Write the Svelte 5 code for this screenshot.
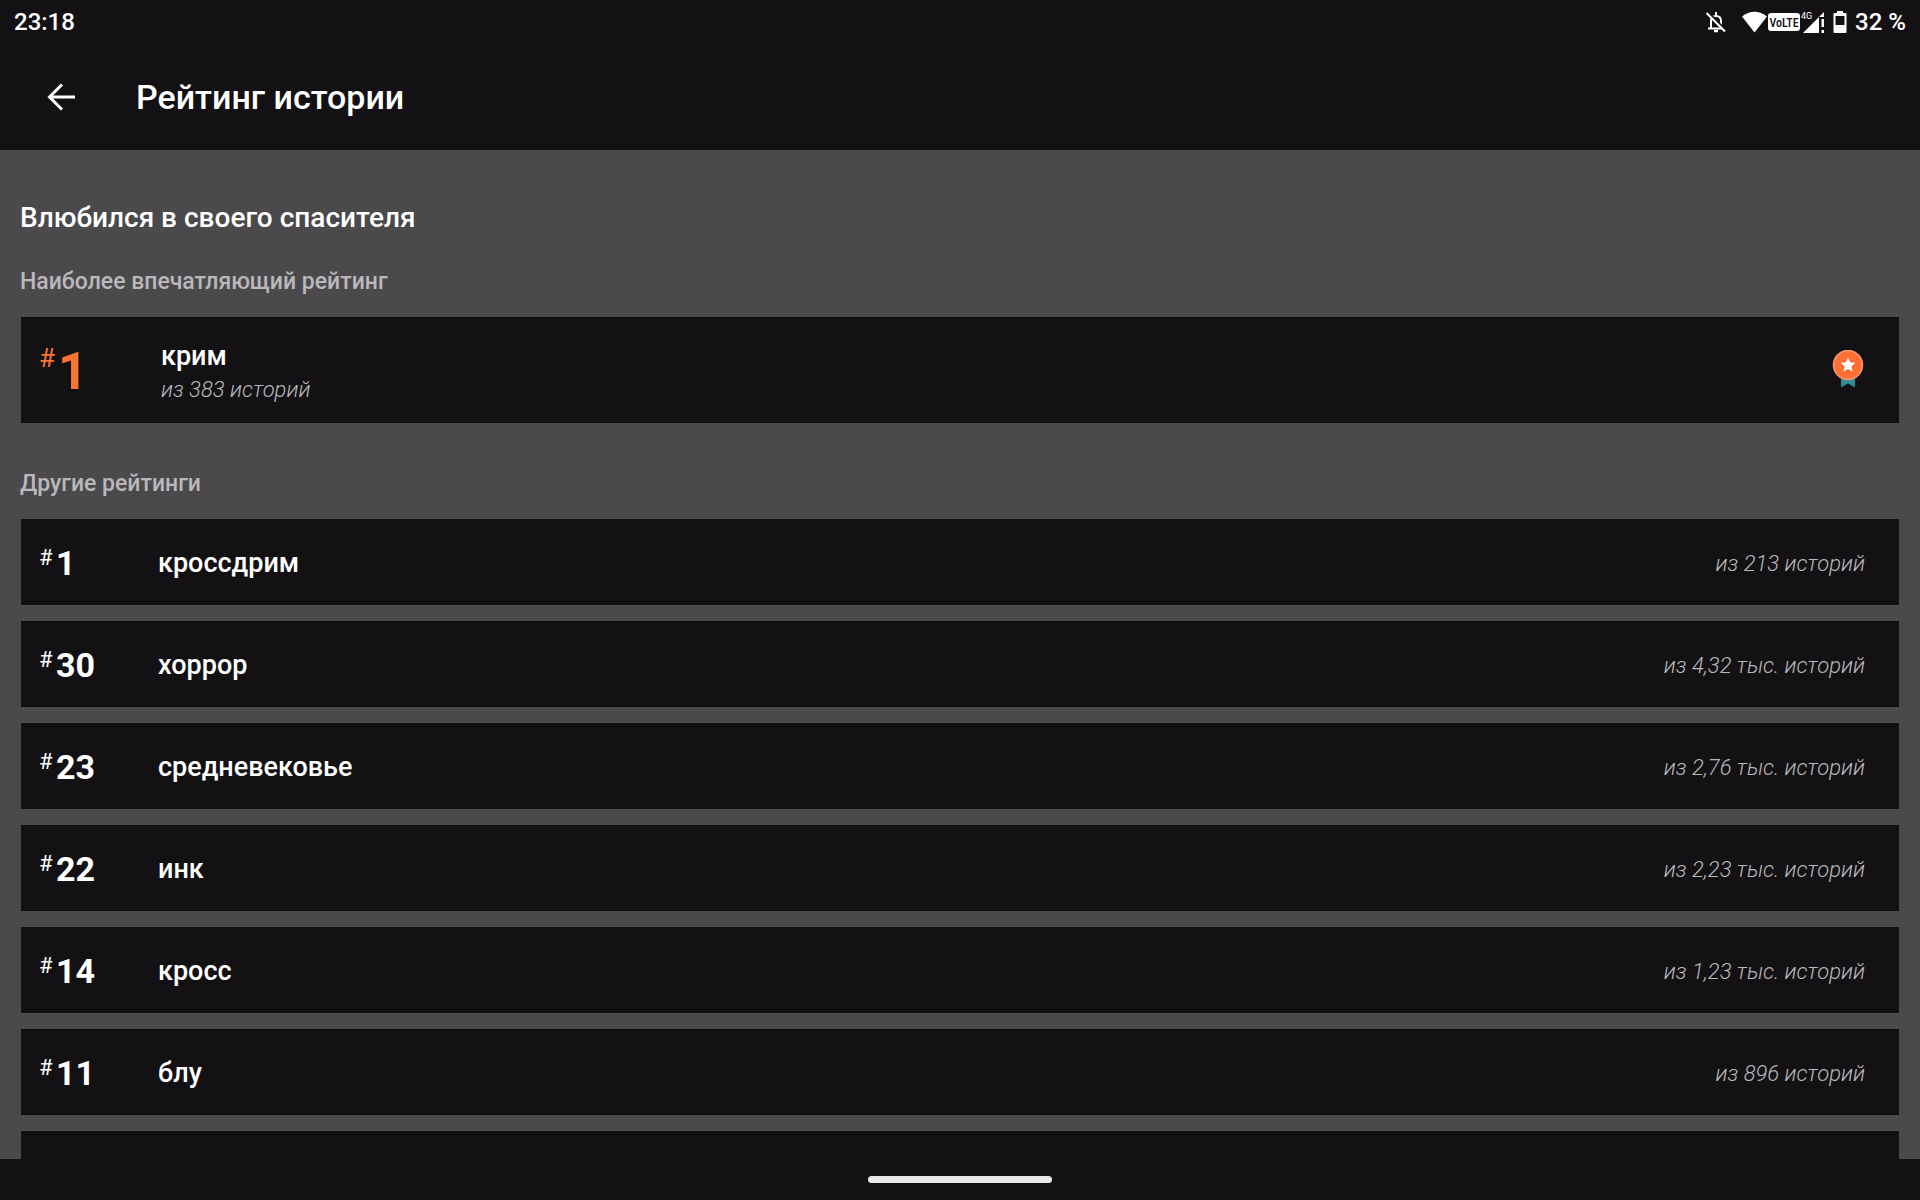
<script lang="ts">
  interface Ranking {
    place: number;
    tag: string;
    total: string;
  }

  const story = 'Влюбился в своего спасителя';
  const best: Ranking = { place: 1, tag: 'крим', total: '383' };

  const others: Ranking[] = [
    { place: 1, tag: 'кроссдрим', total: '213' },
    { place: 30, tag: 'хоррор', total: '4,32 тыс.' },
    { place: 23, tag: 'средневековье', total: '2,76 тыс.' },
    { place: 22, tag: 'инк', total: '2,23 тыс.' },
    { place: 14, tag: 'кросс', total: '1,23 тыс.' },
    { place: 11, tag: 'блу', total: '896' },
  ];
</script>

<div class="screen">
  <div class="status-bar">
    <span>23:18</span>
    <div class="status-icons">
      <svg class="bell" width="22" height="22" viewBox="0 0 22 22" fill="none" stroke="#fff" stroke-width="2">
        <path d="M3 17.5h16M6 17v-7c0-3 2-5 5-5s5 2 5 5v7M11 1v4" />
        <path d="M9 20h4" stroke-width="2.5" />
        <path d="M3.6 1.8l18 18" stroke="#131114" />
        <path d="M1.500 2l18.5 18.5" />
      </svg>
      <svg width="27" height="22" viewBox="0 0 27 22">
        <path d="M1 5.5C8.5-1 18.5-1 26 5.5L13.5 21.5z" fill="#fff" />
      </svg>
      <svg width="32" height="20" viewBox="0 0 32 20">
        <rect x="0" y="1" width="32" height="18" rx="3" fill="#fff" />
        <text x="16" y="15" text-anchor="middle" class="volte">VoLTE</text>
      </svg>
      <svg class="signal" width="26" height="24" viewBox="0 0 26 24">
        <path d="M3 23L24 2v5h-5v16z" fill="#fff" />
        <path d="M21.5 9H24v8h-2.5zM21.5 20H24v3h-2.5z" fill="#fff" />
        <text x="1" y="9" class="net">4G</text>
      </svg>
      <svg class="battery" width="14" height="22" viewBox="0 0 14 22">
        <path d="M4 0h6v2h2.5q1 0 1 1v18q0 1-1 1h-11q-1 0-1-1V3q0-1 1-1H4zM2.500 5v9h9V5z" fill="#fff" fill-rule="evenodd" />
      </svg>
      <span>32 %</span>
    </div>
  </div>

  <header>
    <button class="back" aria-label="Назад">
      <svg width="28" height="28" viewBox="0 0 28 28" fill="none" stroke="#fff" stroke-width="3">
        <path d="M28 14H3M15 1.5L2.5 14 15 26.5" />
      </svg>
    </button>
    <h1>Рейтинг истории</h1>
  </header>

  <main>
    <h2>{story}</h2>

    <h3>Наиболее впечатляющий рейтинг</h3>
    <a class="card best" href="#best">
      <span class="rank"><span class="hash">#</span><b>{best.place}</b></span>
      <span class="info">
        <span class="tag">{best.tag}</span>
        <span class="total">из {best.total} историй</span>
      </span>
      <svg class="medal" width="32" height="38" viewBox="0 0 32 38">
        <path d="M9 24h14v13.5l-7-4-7 4z" fill="#2b8f94" />
        <circle cx="16" cy="15" r="14.5" fill="#ff6f33" stroke="#f79a6c" stroke-width="1.5" />
        <path d="M16 7.5l2.2 4.7 5.1.6-3.8 3.5 1 5.1-4.5-2.5-4.5 2.5 1-5.1-3.8-3.5 5.1-.6z" fill="#fff" />
      </svg>
    </a>

    <h3>Другие рейтинги</h3>
    <ul>
      {#each others as item}
        <li>
          <a class="card" href="#{item.tag}">
            <span class="rank"><span class="hash">#</span><b>{item.place}</b></span>
            <span class="tag">{item.tag}</span>
            <span class="total">из {item.total} историй</span>
          </a>
        </li>
      {/each}
      <li class="card"></li>
    </ul>
  </main>

  <footer><div class="handle"></div></footer>
</div>

<style>
  :global(body) {
    margin: 0;
    background: #131114;
  }

  .screen {
    height: 100vh;
    display: flex;
    flex-direction: column;
    overflow: hidden;
    background: #131114;
    color: #fff;
    font-family: Roboto, sans-serif;
  }

  .status-bar {
    display: flex;
    justify-content: space-between;
    align-items: center;
    height: 43px;
    flex-shrink: 0;
    padding: 0 14px;
    font-size: 24px;
    font-weight: 500;
  }

  .status-icons {
    display: flex;
    align-items: center;
  }

  .bell {
    margin-right: 14px;
  }

  .battery {
    margin: 0 8px 0 7px;
  }

  .volte {
    font: 500 12px "Roboto Condensed", "Liberation Sans Narrow", Roboto, sans-serif;
    fill: #131114;
  }

  .net {
    font: 400 9px Roboto, sans-serif;
    fill: #fff;
  }

  header {
    display: flex;
    align-items: center;
    gap: 61px;
    height: 107px;
    flex-shrink: 0;
    padding: 0 47px;
  }

  .back {
    display: flex;
    padding: 0;
    border: 0;
    background: none;
    cursor: pointer;
  }

  h1, h2, h3 {
    margin: 0;
    font-weight: 500;
  }

  h1 {
    font-size: 34px;
    line-height: 40px;
  }

  main {
    flex: 1;
    min-height: 0;
    overflow: hidden;
    padding: 50px 21px 0 20px;
    background: #4b494c;
  }

  h2 {
    font-size: 28px;
    line-height: 36px;
    margin-bottom: 30px;
  }

  h3 {
    font-size: 23px;
    line-height: 32px;
    margin-bottom: 19px;
    color: #b9b8ba;
  }

  .card {
    display: flex;
    align-items: center;
    height: 86px;
    box-sizing: border-box;
    margin-left: 1px;
    padding: 2px 34px 0 18px;
    background: #131114;
    color: #fff;
    text-decoration: none;
  }

  .rank {
    display: flex;
    width: 119px;
    line-height: 40px;
  }

  .hash {
    width: 17px;
    font-size: 22px;
    line-height: 30px;
  }

  .rank b {
    font-size: 34px;
  }

  .tag {
    flex: 1;
    font-size: 27px;
    line-height: 36px;
    font-weight: 500;
  }

  .total {
    font-size: 22px;
    line-height: 32px;
    padding-top: 2px;
    font-style: italic;
    font-weight: 300;
    color: #b9b8ba;
  }

  .best {
    height: 106px;
    padding-top: 4px;
    margin-bottom: 45px;
  }

  .best .rank {
    width: 122px;
    line-height: 60px;
    color: #ff7433;
  }

  .best .hash {
    width: 19px;
    font-size: 26px;
    line-height: 32px;
  }

  .best b {
    font-size: 52px;
  }

  .best .total {
    padding-top: 0;
  }

  .medal {
    margin: 0 1px 6px 0;
  }

  .info {
    display: flex;
    flex: 1;
    flex-direction: column;
  }

  ul {
    display: flex;
    flex-direction: column;
    gap: 16px;
    margin: 0;
    padding: 0;
    list-style: none;
  }

  footer {
    display: flex;
    justify-content: center;
    align-items: center;
    height: 41px;
    flex-shrink: 0;
  }

  .handle {
    width: 184px;
    height: 7px;
    border-radius: 4px;
    background: #ebe8ec;
  }
</style>
